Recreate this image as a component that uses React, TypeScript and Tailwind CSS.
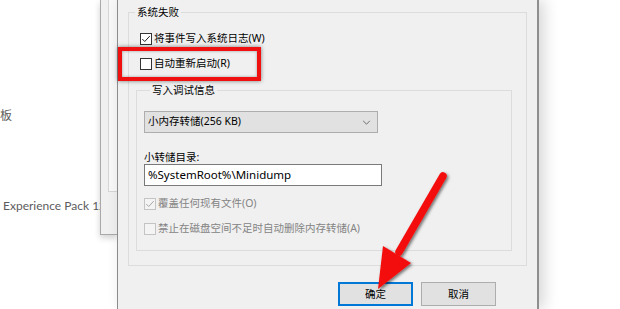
const FONT = "font-['Noto_Sans','Noto_Sans_CJK_SC',sans-serif]";

function Tick({ color }: { color: string }) {
  return (
    <svg viewBox="0 0 12 12" className="w-[10px] h-[10px]">
      <path d="M1.5 6 L4.5 9 L10.5 2.5" fill="none" stroke={color} strokeWidth="1.2" />
    </svg>
  );
}

function CheckRow({
  label,
  checked = false,
  disabled = false,
  className = "",
}: {
  label: string;
  checked?: boolean;
  disabled?: boolean;
  className?: string;
}) {
  return (
    <div className={`flex items-center h-[16px] gap-[2px] ${className}`}>
      <span
        className={
          disabled
            ? "w-[12px] h-[12px] flex items-center justify-center border border-[#c4c4c4] bg-[#f4f4f4]"
            : "w-[12px] h-[12px] flex items-center justify-center border border-[#333333] bg-white"
        }
      >
        {checked && <Tick color={disabled ? "#a8a8a8" : "#222222"} />}
      </span>
      <span className={disabled ? "text-[#848484] whitespace-nowrap" : "text-black whitespace-nowrap"}>
        {label}
      </span>
    </div>
  );
}

export default function App() {
  return (
    <div className={`relative w-[620px] h-[309px] bg-white overflow-hidden flex text-[10.5px] ${FONT}`}>
      {/* Background settings page */}
      <div className="w-[100px] shrink-0 flex flex-col overflow-hidden text-[#5c5c5c] text-[12px] font-['Lato','Noto_Sans_CJK_SC',sans-serif]">
        <span className="mt-[108px] leading-[16px]">板</span>
        <span className="mt-[74px] ml-[3px] leading-[16px] whitespace-nowrap">Experience Pack 12</span>
      </div>

      {/* System properties window behind */}
      <div className="w-[17px] h-[235px] shrink-0 border-l border-b border-[#a9a9a9] bg-[#f0f0f0] shadow-[0_3px_6px_rgba(0,0,0,0.18)]">
        <div className="ml-[7px] h-[192px] border-l border-b border-[#d6d6d6] bg-[#f8f8f8]" />
      </div>

      {/* Startup and Recovery dialog */}
      <div className="w-[422px] h-full shrink-0 flex flex-col pt-[4px] bg-[#f0f0f0] border-l border-[#8c8c8c] border-r-2 border-r-[#8f8f8f] shadow-[5px_0_14px_rgba(0,0,0,0.16)]">
        <fieldset className="ml-[10px] w-[399px] border border-[#dcdcdc] pb-[14px]">
          <legend className="ml-[6px] px-[2px] leading-[16px] text-black">系统失败</legend>
          <CheckRow className="mt-[11px] ml-[11px]" checked label="将事件写入系统日志(W)" />
          <CheckRow className="mt-[9px] ml-[11px]" label="自动重新启动(R)" />

          <fieldset className="mt-[10px] ml-[7px] w-[376px] border border-[#dcdcdc] pl-[7px] pb-[13px]">
            <legend className="ml-[6px] px-[2px] leading-[16px] text-black">写入调试信息</legend>
            <div className="mt-[13px] w-[234px] h-[22px] flex items-center justify-between border border-[#adadad] bg-[#e1e1e1] pl-[3px] pr-[6px] text-black">
              <span>小内存转储(256 KB)</span>
              <svg viewBox="0 0 10 6" className="w-[9px] h-[5px]">
                <path d="M1 1 L5 5 L9 1" fill="none" stroke="#555555" strokeWidth="1" />
              </svg>
            </div>
            <div className="mt-[17px] leading-[14px] text-black">小转储目录:</div>
            <div className="w-[238px] h-[22px] flex items-center border border-[#7a7a7a] bg-white pl-[3px] text-[11.5px] text-black">
              %SystemRoot%\Minidump
            </div>
            <CheckRow className="mt-[10px]" checked disabled label="覆盖任何现有文件(O)" />
            <CheckRow className="mt-[9px]" disabled label="禁止在磁盘空间不足时自动删除内存转储(A)" />
          </fieldset>
        </fieldset>

        <div className="mt-[16px] pl-[220px] flex gap-[8px]">
          <button className="w-[75px] h-[24px] border-2 border-[#0078d7] bg-[#e1e1e1] text-black leading-none">
            确定
          </button>
          <button className="w-[75px] h-[24px] border border-[#adadad] bg-[#e1e1e1] text-black leading-none">
            取消
          </button>
        </div>
      </div>

      {/* Annotation: red highlight box */}
      <div className="absolute left-[118px] top-[47px] w-[143px] h-[34px] border-4 border-[#f01010] shadow-[0_0_4px_rgba(0,0,0,0.5),inset_0_0_3px_rgba(0,0,0,0.35)]" />

      {/* Annotation: red arrow */}
      <svg className="absolute left-0 top-0 w-[620px] h-[309px] pointer-events-none" viewBox="0 0 620 309">
        <defs>
          <filter id="sh" x="-20%" y="-20%" width="140%" height="140%">
            <feDropShadow dx="1.5" dy="1.5" stdDeviation="1.8" floodColor="#000" floodOpacity="0.55" />
          </filter>
        </defs>
        <g filter="url(#sh)" fill="#f41010">
          <line x1="443" y1="176" x2="399" y2="252" stroke="#f41010" strokeWidth="7.5" strokeLinecap="round" />
          <polygon points="378,289 383,246 411,263" />
        </g>
      </svg>
    </div>
  );
}
